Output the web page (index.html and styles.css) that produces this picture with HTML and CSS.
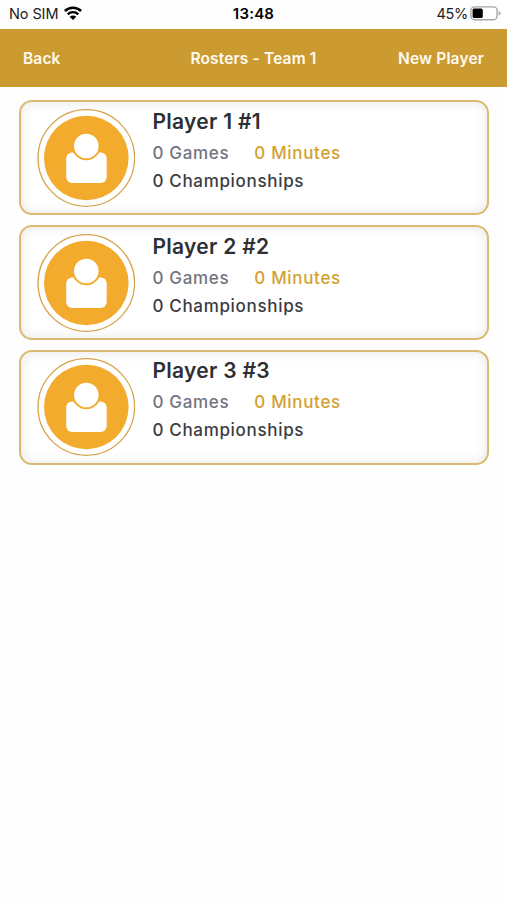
FILE: index.html
```
<!DOCTYPE html>
<html lang="en">
<head>
    <meta charset="UTF-8">
    <meta name="viewport" content="width=device-width, initial-scale=1.0">
    <title>Rosters - Team 1</title>
    <link rel="stylesheet" href="styles.css">
</head>
<body>

    <!-- Status bar -->
    <div class="status-bar">
        <div class="carrier">
            <span class="carrier-name">No SIM</span>
            <svg class="wifi" width="18" height="14" viewBox="0 0 18 14">
                <path d="M0.9 5 A11.7 11.7 0 0 1 17.1 5" fill="none" stroke="#000" stroke-width="2.6"/>
                <path d="M3.7 8.3 A7.6 7.6 0 0 1 14.3 8.3" fill="none" stroke="#000" stroke-width="2.4"/>
                <path d="M9 14 L5.7 10.8 A4.6 4.6 0 0 1 12.3 10.8 Z" fill="#000"/>
            </svg>
        </div>
        <div class="clock">13:48</div>
        <div class="battery">
            <span class="battery-level">45%</span>
            <svg width="31" height="15" viewBox="0 0 31 15">
                <rect x="0.9" y="0.9" width="26.2" height="12.8" rx="3.8" fill="#fff" stroke="#a5a5a5" stroke-width="1.4"/>
                <rect x="2.6" y="2.6" width="10.2" height="9.4" rx="1.6" fill="#000"/>
                <path d="M28.6 5 Q30.6 5.8 30.6 7.3 T28.6 9.6 Z" fill="#a5a5a5"/>
            </svg>
        </div>
    </div>

    <!-- Navigation -->
    <div class="nav-bar">
        <a href="#" class="nav-back">Back</a>
        <h1 class="nav-title">Rosters - Team 1</h1>
        <a href="#" class="nav-new">New Player</a>
    </div>

    <div class="roster">
        <!-- Player 1 -->
        <div class="player-card">
            <svg class="avatar" width="98" height="98" viewBox="0 0 98 98">
                <circle cx="49.3" cy="49" r="48.3" fill="#fff" stroke="#d5a248" stroke-width="1.3"/>
                <circle cx="49.3" cy="49" r="42.3" fill="#f3ab2d"/>
                <rect x="29.2" y="43.5" width="40.5" height="30.5" rx="6" fill="#fff"/>
                <circle cx="49.3" cy="37" r="13.3" fill="#fff" stroke="#f3ab2d" stroke-width="2"/>
            </svg>
            <div class="player-info">
                <h2 class="player-name">Player 1 #1</h2>
                <div class="stats">
                    <span class="games">0 Games</span>
                    <span class="minutes">0 Minutes</span>
                </div>
                <div class="titles">0 Championships</div>
            </div>
        </div>

        <!-- Player 2 -->
        <div class="player-card">
            <svg class="avatar" width="98" height="98" viewBox="0 0 98 98">
                <circle cx="49.3" cy="49" r="48.3" fill="#fff" stroke="#d5a248" stroke-width="1.3"/>
                <circle cx="49.3" cy="49" r="42.3" fill="#f3ab2d"/>
                <rect x="29.2" y="43.5" width="40.5" height="30.5" rx="6" fill="#fff"/>
                <circle cx="49.3" cy="37" r="13.3" fill="#fff" stroke="#f3ab2d" stroke-width="2"/>
            </svg>
            <div class="player-info">
                <h2 class="player-name">Player 2 #2</h2>
                <div class="stats">
                    <span class="games">0 Games</span>
                    <span class="minutes">0 Minutes</span>
                </div>
                <div class="titles">0 Championships</div>
            </div>
        </div>

        <!-- Player 3 -->
        <div class="player-card">
            <svg class="avatar" width="98" height="98" viewBox="0 0 98 98">
                <circle cx="49.3" cy="49" r="48.3" fill="#fff" stroke="#d5a248" stroke-width="1.3"/>
                <circle cx="49.3" cy="49" r="42.3" fill="#f3ab2d"/>
                <rect x="29.2" y="43.5" width="40.5" height="30.5" rx="6" fill="#fff"/>
                <circle cx="49.3" cy="37" r="13.3" fill="#fff" stroke="#f3ab2d" stroke-width="2"/>
            </svg>
            <div class="player-info">
                <h2 class="player-name">Player 3 #3</h2>
                <div class="stats">
                    <span class="games">0 Games</span>
                    <span class="minutes">0 Minutes</span>
                </div>
                <div class="titles">0 Championships</div>
            </div>
        </div>
    </div>

</body>
</html>
```
FILE: styles.css
```
* {
    box-sizing: border-box;
}

body {
    font-family: Inter, "Liberation Sans", sans-serif;
    margin: 0;
    background-color: #fefefe;
}

/* Status bar */
.status-bar {
    display: grid;
    grid-template-columns: 1fr auto 1fr;
    align-items: center;
    height: 29px;
    padding: 0 6px 2px 9px;
    font-size: 14.5px;
    color: #1c1c1c;
}

.carrier,
.battery {
    display: flex;
    align-items: center;
}

.carrier {
    gap: 6px;
}

.carrier-name {
    letter-spacing: -0.1px;
}

.wifi {
    margin-top: -2px;
}

.clock {
    margin-right: 3px;
    font-size: 15px;
    font-weight: 600;
    letter-spacing: 0.2px;
    color: #000;
}

.battery {
    justify-content: flex-end;
    gap: 2px;
}

.battery-level {
    letter-spacing: -0.3px;
}

/* Navigation */
.nav-bar {
    display: grid;
    grid-template-columns: 1fr auto 1fr;
    align-items: center;
    height: 58px;
    padding: 0 23px;
    background-color: #cb9b32;
    color: #fffaf0;
    font-size: 15.5px;
    font-weight: 600;
    letter-spacing: 0.15px;
}

.nav-bar a {
    color: inherit;
    text-decoration: none;
}

.nav-title {
    margin: 0;
    font-size: inherit;
    font-weight: inherit;
}

.nav-new {
    text-align: right;
}

/* Player list */
.roster {
    display: flex;
    flex-direction: column;
    gap: 9.6px;
    padding: 13.4px 18px 0 19px;
}

.player-card {
    display: flex;
    height: 115px;
    padding: 6.8px 16.4px 0;
    border: 2px solid #dbb970;
    border-radius: 13px;
    background-color: #fff;
    box-shadow: inset 0 0 12px rgba(60, 60, 80, 0.13);
}

.avatar {
    flex: none;
}

.player-info {
    margin: -1px 0 0 17px;
    font-size: 17px;
    font-weight: 500;
    letter-spacing: 0.68px;
    white-space: nowrap;
}

.player-name {
    margin: 0;
    font-size: 21px;
    font-weight: 600;
    line-height: 28px;
    letter-spacing: 0.3px;
    color: #2d2f35;
}

.stats {
    display: flex;
    gap: 25px;
    line-height: 34px;
}

.games {
    color: #70747f;
}

.minutes {
    color: #d3a02f;
}

.titles {
    line-height: 23px;
    color: #3b3c43;
}
```
